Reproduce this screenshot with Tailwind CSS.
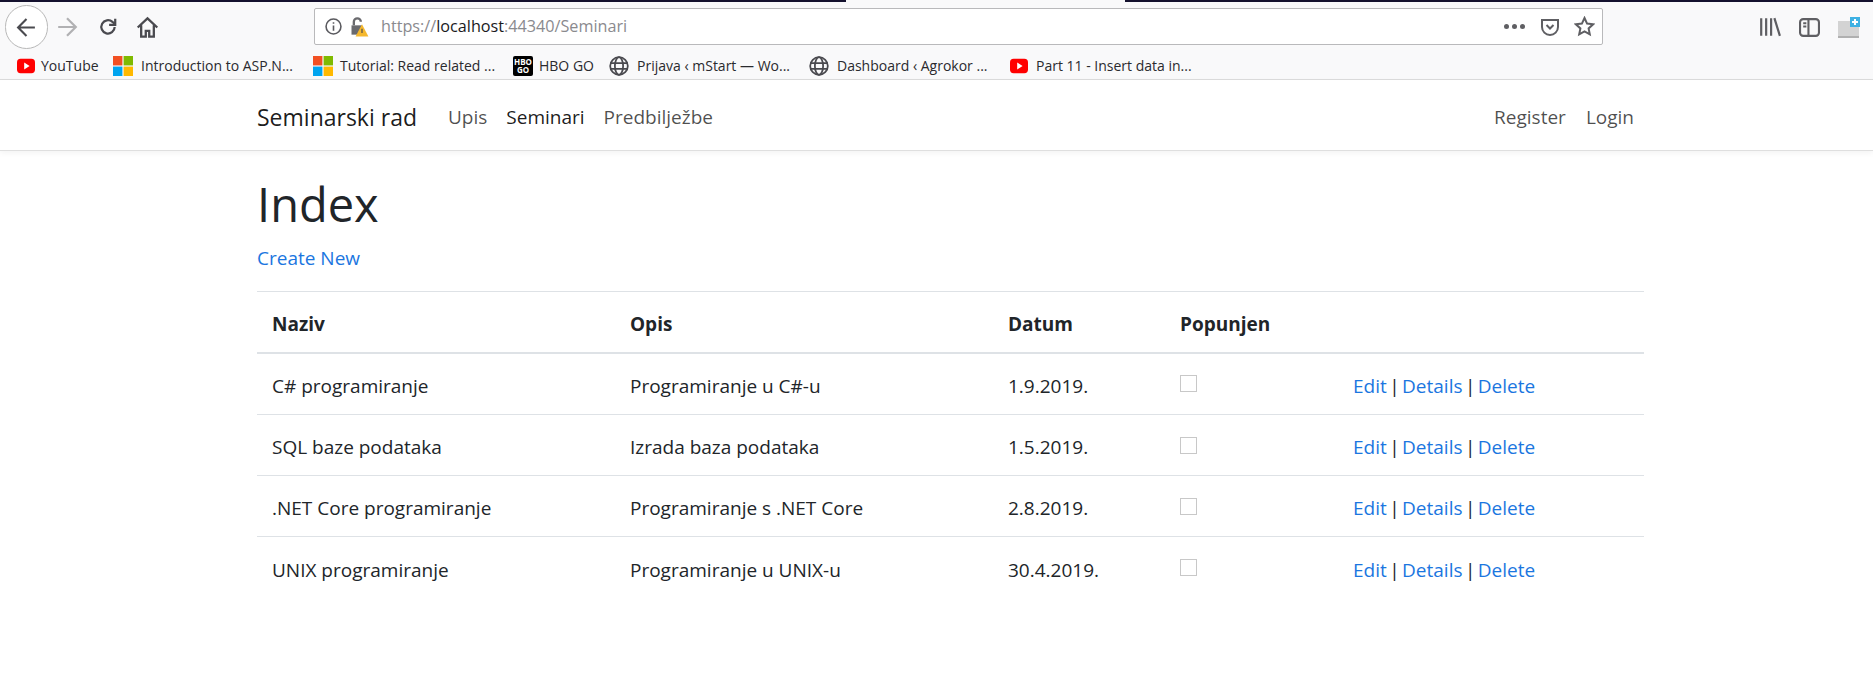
<!DOCTYPE html>
<html>
  <head>
    <title>Index</title>
    <script src="https://cdn.jsdelivr.net/npm/@tailwindcss/browser@4"></script>
  </head>
  <body class="bg-white overflow-hidden h-[696px] font-['Open_Sans',sans-serif] text-[#212529]">
    <!-- browser chrome -->
    <div class="h-[80px] bg-[#f9f9fa] border-b border-[#dcdcdc] flex flex-col">
      <div class="h-[2px] flex shrink-0">
        <div class="w-[846px] bg-[#14112e]"></div>
        <div class="w-[279px] bg-[#f9f9fa]"></div>
        <div class="flex-1 bg-[#14112e]"></div>
      </div>
      <div class="h-[50px] flex items-center relative">
        <div class="ml-[5px] w-[43px] h-[44px] rounded-full border border-[#b8b8b8] bg-white flex items-center justify-center">
          <svg width="21" height="21" viewBox="0 0 20 20" fill="none" stroke="#4a4a4f" stroke-width="2"><path d="M18 10H2M10 2l-8 8 8 8"/></svg>
        </div>
        <svg class="ml-[8px]" width="22" height="22" viewBox="0 0 20 20" fill="none" stroke="#b1b1b3" stroke-width="2"><path d="M2 10h16M10 2l8 8-8 8"/></svg>
        <svg class="ml-[20px]" width="20" height="20" viewBox="0 0 18 18" fill="none" stroke="#4a4a4f" stroke-width="2"><path d="M15 9a6 6 0 1 1-2-4.600L15 6"/><path d="M15.500 1.500V7H10"/></svg>
        <svg class="ml-[18px]" width="23" height="23" viewBox="0 0 20 20" fill="none" stroke="#4a4a4f" stroke-width="2"><path d="M1.500 10 10 2l8.500 8M4.500 8v10h4v-5h3v5h4V8"/></svg>
        <div class="absolute left-[314px] top-[6px] w-[1289px] h-[37px] bg-white border border-[#b9b9bb] rounded-[2px] flex items-center">
          <svg class="ml-[10px]" width="17" height="17" viewBox="0 0 16 16" fill="none" stroke="#5a5a5f" stroke-width="1.500"><circle cx="8" cy="8" r="7"/><path d="M8 7v5M8 4v1.500"/></svg>
          <svg class="ml-[6px]" width="21" height="21" viewBox="0 0 18 18"><path d="M3 8h9v8H3z" fill="#6a6a6e"/><path d="M5 8V5a3 3 0 0 1 6 0" fill="none" stroke="#6a6a6e" stroke-width="2"/><path d="M12 7l5.500 10.500h-11z" fill="#f5b82e"/><path d="M12 11v3.500" stroke="#4a4a4f"/></svg>
          <span class="ml-[12px] text-[16.200px] text-[#8a8a8e]">https://<span class="text-[#1a1a1c]">localhost</span>:44340/Seminari</span>
          <div class="ml-auto flex items-center">
            <span class="flex gap-[3px]">
              <span class="w-[5px] h-[5px] rounded-full bg-[#5f5f63]"></span>
              <span class="w-[5px] h-[5px] rounded-full bg-[#5f5f63]"></span>
              <span class="w-[5px] h-[5px] rounded-full bg-[#5f5f63]"></span>
            </span>
            <svg class="ml-[15px]" width="20" height="20" viewBox="0 0 20 20" fill="none" stroke="#5f5f63" stroke-width="2"><path d="M2 3h16v7a8 8 0 0 1-16 0zM6.500 8l3.500 3.500L13.500 8"/></svg>
            <svg class="ml-[14px] mr-[7px]" width="21" height="21" viewBox="0 0 21 21" fill="none" stroke="#5f5f63" stroke-width="2"><path d="M10.500 2l2.600 5.600 6 .7-4.500 4.100 1.200 6-5.300-3-5.300 3 1.200-6L1.900 8.300l6-.7z"/></svg>
          </div>
        </div>
        <div class="absolute right-[13px] top-[14px] flex items-center">
          <svg width="22" height="22" viewBox="0 0 20 20" fill="none" stroke="#5f5f63" stroke-width="2"><path d="M2 2v16M6.500 2v16M11 2v16M14 2l5 16"/></svg>
          <svg class="ml-[18px]" width="21" height="21" viewBox="0 0 20 20" fill="none" stroke="#5f5f63" stroke-width="2"><rect x="1" y="2" width="18" height="16" rx="3"/><path d="M9 2v16M4 6h3M4 9h3"/></svg>
          <div class="ml-[18px] relative w-[22px] h-[21px]">
            <div class="absolute left-0 bottom-0 w-[21px] h-[17px] bg-[#d3d3d3] border-b-2 border-[#b0b0b0]"></div>
            <div class="absolute right-0 top-0 w-[10px] h-[10px] bg-[#3fb1e3] flex items-center justify-center">
              <svg width="6" height="6" viewBox="0 0 6 6" stroke="#fff" stroke-width="2"><path d="M3 0v6M0 3h6"/></svg>
            </div>
          </div>
        </div>
      </div>
      <div class="flex-1 flex items-center pl-[17px] pt-[1px] text-[14px] text-[#2a2a2e] leading-none whitespace-nowrap">
        <svg width="18" height="18" viewBox="0 0 15 15"><rect y="1.500" width="15" height="12" rx="3" fill="#f00"/><path d="M6 4.500v6l4.500-3z" fill="#fff"/></svg>
        <span class="ml-[6px] w-[57px]">YouTube</span>
        <svg class="ml-[15px]" width="20" height="20" viewBox="0 0 17 17"><rect width="8" height="8" fill="#f25022"/><rect x="9" width="8" height="8" fill="#7fba00"/><rect y="9" width="8" height="8" fill="#00a4ef"/><rect x="9" y="9" width="8" height="8" fill="#ffb900"/></svg>
        <span class="ml-[8px] w-[154px]">Introduction to ASP.N...</span>
        <svg class="ml-[18px]" width="20" height="20" viewBox="0 0 17 17"><rect width="8" height="8" fill="#f25022"/><rect x="9" width="8" height="8" fill="#7fba00"/><rect y="9" width="8" height="8" fill="#00a4ef"/><rect x="9" y="9" width="8" height="8" fill="#ffb900"/></svg>
        <span class="ml-[7px] w-[156px]">Tutorial: Read related ...</span>
        <span class="ml-[17px] w-[20px] h-[20px] bg-black rounded-[2px] text-white text-[8px] font-bold leading-[8px] text-center flex flex-col items-center justify-center"><span>HBO</span><span>GO</span></span>
        <span class="ml-[6px] w-[54px]">HBO GO</span>
        <svg class="ml-[16px]" width="20" height="20" viewBox="0 0 17 17" fill="none" stroke="#4a4a4f" stroke-width="1.500"><circle cx="8.500" cy="8.500" r="7.500"/><ellipse cx="8.500" cy="8.500" rx="3.500" ry="7.500"/><path d="M1 6h15M1 11h15"/></svg>
        <span class="ml-[8px] w-[155px]">Prijava ‹ mStart — Wo...</span>
        <svg class="ml-[17px]" width="20" height="20" viewBox="0 0 17 17" fill="none" stroke="#4a4a4f" stroke-width="1.500"><circle cx="8.500" cy="8.500" r="7.500"/><ellipse cx="8.500" cy="8.500" rx="3.500" ry="7.500"/><path d="M1 6h15M1 11h15"/></svg>
        <span class="ml-[8px] w-[154px]">Dashboard ‹ Agrokor ...</span>
        <svg class="ml-[19px]" width="18" height="18" viewBox="0 0 15 15"><rect y="1.500" width="15" height="12" rx="3" fill="#f00"/><path d="M6 4.500v6l4.500-3z" fill="#fff"/></svg>
        <span class="ml-[8px]">Part 11 - Insert data in...</span>
      </div>
    </div>

    <!-- navbar -->
    <nav class="h-[71px] pt-[5px] border-b border-[#dfdfdf] shadow-[0_2px_6px_rgba(0,0,0,0.05)] bg-white pl-[257px] pr-[239px] flex items-center text-[19px] text-black/70">
      <a class="text-[23px] text-black/90 mr-[31px]">Seminarski rad</a>
      <div class="flex gap-[19px]">
        <a>Upis</a>
        <a class="text-black/90">Seminari</a>
        <a>Predbilježbe</a>
      </div>
      <div class="ml-auto flex gap-[20px]">
        <a>Register</a>
        <a>Login</a>
      </div>
    </nav>

    <main class="ml-[257px] mr-[229px] text-[19px]">
      <h1 class="mt-[27px] text-[47px] leading-[53px]">Index</h1>
      <a class="block mt-[15px] text-[#1b76e0] leading-[24px]">Create New</a>
      <table class="mt-[21px] w-full table-fixed border-collapse text-left">
        <colgroup>
          <col class="w-[358px]"><col class="w-[378px]"><col class="w-[172px]"><col class="w-[173px]"><col>
        </colgroup>
        <thead>
          <tr class="h-[61px] border-t border-b-2 border-t-[#dee2e6] border-b-[#dee2e6]">
            <th class="pl-[15px] pt-[4px] font-bold">Naziv</th>
            <th class="pl-[15px] pt-[4px] font-bold">Opis</th>
            <th class="pl-[15px] pt-[4px] font-bold">Datum</th>
            <th class="pl-[15px] pt-[4px] font-bold">Popunjen</th>
            <th></th>
          </tr>
        </thead>
        <tbody>
          <tr class="h-[62px] border-b border-[#dee2e6]">
            <td class="pl-[15px] pt-[5px]">C# programiranje</td>
            <td class="pl-[15px] pt-[5px]">Programiranje u C#-u</td>
            <td class="pl-[15px] pt-[5px]">1.9.2019.</td>
            <td class="pl-[15px]"><span class="block w-[17px] h-[17px] border border-[#c8c8c8]"></span></td>
            <td class="pl-[15px] pt-[5px]"><a class="text-[#1b76e0]">Edit</a> <span class="mx-[-2.500px]">|</span> <a class="text-[#1b76e0]">Details</a> <span class="mx-[-2.500px]">|</span> <a class="text-[#1b76e0]">Delete</a></td>
          </tr>
          <tr class="h-[61px] border-b border-[#dee2e6]">
            <td class="pl-[15px] pt-[5px]">SQL baze podataka</td>
            <td class="pl-[15px] pt-[5px]">Izrada baza podataka</td>
            <td class="pl-[15px] pt-[5px]">1.5.2019.</td>
            <td class="pl-[15px]"><span class="block w-[17px] h-[17px] border border-[#c8c8c8]"></span></td>
            <td class="pl-[15px] pt-[5px]"><a class="text-[#1b76e0]">Edit</a> <span class="mx-[-2.500px]">|</span> <a class="text-[#1b76e0]">Details</a> <span class="mx-[-2.500px]">|</span> <a class="text-[#1b76e0]">Delete</a></td>
          </tr>
          <tr class="h-[61px] border-b border-[#dee2e6]">
            <td class="pl-[15px] pt-[5px]">.NET Core programiranje</td>
            <td class="pl-[15px] pt-[5px]">Programiranje s .NET Core</td>
            <td class="pl-[15px] pt-[5px]">2.8.2019.</td>
            <td class="pl-[15px]"><span class="block w-[17px] h-[17px] border border-[#c8c8c8]"></span></td>
            <td class="pl-[15px] pt-[5px]"><a class="text-[#1b76e0]">Edit</a> <span class="mx-[-2.500px]">|</span> <a class="text-[#1b76e0]">Details</a> <span class="mx-[-2.500px]">|</span> <a class="text-[#1b76e0]">Delete</a></td>
          </tr>
          <tr class="h-[61px]">
            <td class="pl-[15px] pt-[5px]">UNIX programiranje</td>
            <td class="pl-[15px] pt-[5px]">Programiranje u UNIX-u</td>
            <td class="pl-[15px] pt-[5px]">30.4.2019.</td>
            <td class="pl-[15px]"><span class="block w-[17px] h-[17px] border border-[#c8c8c8]"></span></td>
            <td class="pl-[15px] pt-[5px]"><a class="text-[#1b76e0]">Edit</a> <span class="mx-[-2.500px]">|</span> <a class="text-[#1b76e0]">Details</a> <span class="mx-[-2.500px]">|</span> <a class="text-[#1b76e0]">Delete</a></td>
          </tr>
        </tbody>
      </table>
    </main>
  </body>
</html>
